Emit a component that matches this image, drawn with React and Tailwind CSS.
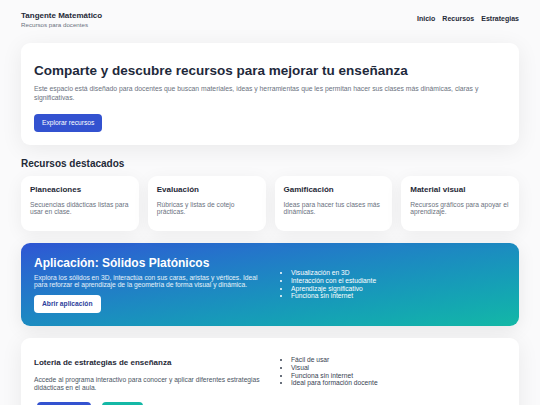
const recursos = [
  {
    title: "Planeaciones",
    text: "Secuencias didácticas listas para usar en clase.",
  },
  {
    title: "Evaluación",
    text: "Rúbricas y listas de cotejo prácticas.",
  },
  {
    title: "Gamificación",
    text: "Ideas para hacer tus clases más dinámicas.",
  },
  {
    title: "Material visual",
    text: "Recursos gráficos para apoyar el aprendizaje.",
  },
];

const App = () => {
  return (
    <div className="min-h-screen bg-[#fafafb] font-['Liberation_Sans',Arial,sans-serif] text-[#1f2937]">

      {/* Header */}
      <header className="flex items-center justify-between px-[21px] pt-[11px]">
        <div>
          <h1 className="text-[8px] font-bold leading-[1.2] text-[#1f2937]">
            Tangente Matemático
          </h1>
          <p className="text-[6.2px] leading-[1.2] text-[#6b7280]">
            Recursos para docentes
          </p>
        </div>

        <nav className="flex gap-[7px] text-[7px] font-bold text-[#1f2937]">
          <a>Inicio</a>
          <a>Recursos</a>
          <a>Estrategias</a>
        </nav>
      </header>

      <main className="px-[21px] pt-[15px]">

        {/* Hero */}
        <section className="bg-white rounded-[9px] shadow-[0_4px_22px_rgba(0,0,0,0.07)] px-[13px] pt-[20px] pb-[13px]">
          <h2 className="text-[13.5px] font-bold leading-[1.2] text-[#1e293b]">
            Comparte y descubre recursos para mejorar tu enseñanza
          </h2>

          <p className="mt-[6px] text-[6.8px] leading-[8.4px] text-[#6b7280]">
            Este espacio está diseñado para docentes que buscan materiales, ideas y herramientas que les permitan hacer sus clases más dinámicas, claras y significativas.
          </p>

          <button className="mt-[12px] h-[18px] px-[8px] rounded-[4px] bg-[#3352d0] text-white text-[6.7px]">
            Explorar recursos
          </button>
        </section>

        {/* Recursos destacados */}
        <h2 className="mt-[13px] text-[10px] font-bold leading-[1.2] text-[#1f2937]">
          Recursos destacados
        </h2>

        <div className="mt-[6px] grid grid-cols-4 gap-[9px]">
          {recursos.map((item) => (
            <div
              key={item.title}
              className="bg-white rounded-[9px] shadow-[0_4px_18px_rgba(0,0,0,0.06)] px-[9px] pt-[9px] pb-[15px]"
            >
              <h3 className="text-[8px] font-bold leading-[1.2] text-[#1f2937]">
                {item.title}
              </h3>
              <p className="mt-[6px] text-[6.7px] leading-[7.8px] text-[#6b7280]">
                {item.text}
              </p>
            </div>
          ))}
        </div>

        {/* App card */}
        <section className="mt-[12px] rounded-[9px] bg-linear-to-br from-[#2f55d4] to-[#14b8a6] shadow-[0_4px_18px_rgba(0,0,0,0.08)] p-[13px] grid grid-cols-[235px_1fr] gap-[9px] items-center text-white">
          <div>
            <h2 className="text-[12px] font-bold leading-[1.2]">
              Aplicación: Sólidos Platónicos
            </h2>
            <p className="mt-[3px] text-[6.7px] leading-[7.8px] text-white/90">
              Explora los sólidos en 3D, interactúa con sus caras, aristas y vértices. Ideal para reforzar el aprendizaje de la geometría de forma visual y dinámica.
            </p>
            <button className="mt-[6px] h-[18px] px-[8px] rounded-[4px] bg-white text-[#2c3e9c] text-[6.7px] font-bold">
              Abrir aplicación
            </button>
          </div>

          <ul className="list-disc pl-[13px] text-[6.7px] leading-[7.7px]">
            <li>Visualización en 3D</li>
            <li>Interacción con el estudiante</li>
            <li>Aprendizaje significativo</li>
            <li>Funciona sin internet</li>
          </ul>
        </section>

        {/* Loteria */}
        <section className="mt-[12px] bg-white rounded-[9px] shadow-[0_4px_22px_rgba(0,0,0,0.07)] px-[13px] pt-[20px] pb-[20px] grid grid-cols-[235px_1fr] gap-[9px] items-start">
          <div>
            <h2 className="text-[8px] font-bold leading-[1.2] text-[#1f2937]">
              Loteria de estrategias de enseñanza
            </h2>
            <p className="mt-[8px] text-[6.7px] leading-[7.8px] text-[#4b5563]">
              Accede al programa interactivo para conocer y aplicar diferentes estrategias didácticas en el aula.
            </p>
            <div className="mt-[11px] flex gap-[11px] pl-[3px]">
              <button className="h-[18px] w-[54px] rounded-[4px] bg-[#3352d0] text-white text-[6.7px]">
                Abrir
              </button>
              <button className="h-[18px] w-[41px] rounded-[4px] bg-[#14b8a6] text-white text-[6.7px]">
                Ver
              </button>
            </div>
          </div>

          <ul className="-mt-[2px] list-disc pl-[13px] text-[6.7px] leading-[7.7px] text-[#374151]">
            <li>Fácil de usar</li>
            <li>Visual</li>
            <li>Funciona sin internet</li>
            <li>Ideal para formación docente</li>
          </ul>
        </section>

      </main>
    </div>
  );
};

export default App;
